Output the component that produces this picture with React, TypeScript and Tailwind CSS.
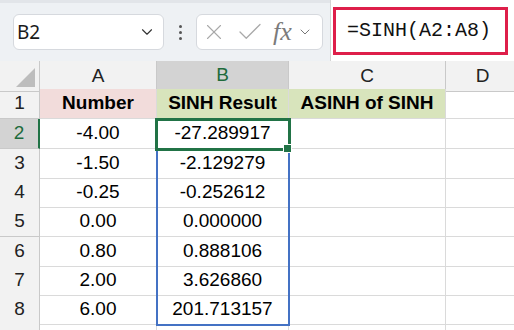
import { ChevronDown, X, Check } from 'lucide-react'

const rows = [
  { n: 2, a: '-4.00', b: '-27.289917', h: 'h-[30px]' },
  { n: 3, a: '-1.50', b: '-2.129279', h: 'h-[29px]' },
  { n: 4, a: '-0.25', b: '-0.252612', h: 'h-[29px]' },
  { n: 5, a: '0.00', b: '0.000000', h: 'h-[30px]' },
  { n: 6, a: '0.80', b: '0.888106', h: 'h-[29px]' },
  { n: 7, a: '2.00', b: '3.626860', h: 'h-[29px]' },
  { n: 8, a: '6.00', b: '201.713157', h: 'h-[29px]' },
]

const cols = 'grid grid-cols-[40px_117px_132px_157px_74px]'
const cell = 'flex items-center justify-center border-r border-b border-[#dadada]'
const rowHead = 'flex items-center justify-center border-r border-b border-[#c9c9c9] bg-[#f2f2f2] text-[#222]'

function Toolbar() {
  return (
    <div className="flex h-[61px]">
      <div className="flex items-center w-[330px] bg-[#eef1f4] border-t-[3px] border-[#e2e5e9] font-['Noto_Sans',sans-serif]">
        <div className="ml-[13px] w-[151px] h-[36px] flex items-center justify-between bg-white border border-[#d6d9de] rounded-[6px] pl-[3px] pr-[7px]">
          <span className="text-[19px] text-[#1a1a1a] leading-none">B2</span>
          <ChevronDown size={18} strokeWidth={1.5} className="text-[#333]" />
        </div>
        <div className="w-[32px] flex flex-col items-center gap-[3px]">
          <span className="w-[3px] h-[3px] rounded-full bg-[#555]" />
          <span className="w-[3px] h-[3px] rounded-full bg-[#555]" />
          <span className="w-[3px] h-[3px] rounded-full bg-[#555]" />
        </div>
        <div className="w-[127px] h-[36px] flex items-center bg-white border border-[#d6d9de] rounded-[6px] pl-[4px]">
          <X size={26} strokeWidth={1} className="text-[#a9a9a9]" />
          <Check size={30} strokeWidth={1} className="text-[#a9a9a9] ml-[8px]" />
          <span className="ml-[8px] font-['Liberation_Serif',serif] italic text-[26px] text-[#7b7b7b] leading-none">fx</span>
          <ChevronDown size={16} strokeWidth={1.5} className="text-[#777] ml-[5px]" />
        </div>
      </div>
      <div className="flex-1 flex items-center bg-white border-l border-[#d4d4d4] pl-[2px]">
        <div className="w-[175px] h-[48px] border-[3px] border-[#de1f4a] flex items-center pl-[11px]">
          <span className="font-['Liberation_Mono',monospace] text-[20px] text-[#111] leading-none">=SINH(A2:A8)</span>
        </div>
      </div>
    </div>
  )
}

function Sheet() {
  return (
    <div className="relative text-[19px] text-black">
      <div className={`${cols} h-[28px] text-[#222]`}>
        <div className="relative border-r border-b border-[#c9c9c9] bg-[#f2f2f2]">
          <svg className="absolute right-[4px] bottom-[4px]" width="19" height="19" viewBox="0 0 19 19">
            <path d="M19 0 L19 19 L0 19 Z" fill="#bdbdbd" />
          </svg>
        </div>
        <div className="flex items-center justify-center border-r border-b border-[#c9c9c9] bg-[#f2f2f2]">A</div>
        <div className="flex items-center justify-center border-r border-[#c9c9c9] border-b-2 border-b-[#217346] bg-[#d3d3d3] text-[#1e6b3c]">B</div>
        <div className="flex items-center justify-center border-r border-b border-[#c9c9c9] bg-[#f2f2f2]">C</div>
        <div className="flex items-center justify-center border-r border-b border-[#c9c9c9] bg-[#f2f2f2]">D</div>
      </div>
      <div className={`${cols} h-[30px] font-bold`}>
        <div className={`${rowHead} font-normal`}>1</div>
        <div className={`${cell} bg-[#f2dcdb]`}>Number</div>
        <div className={`${cell} bg-[#d8e4bc]`}>SINH Result</div>
        <div className={`${cell} bg-[#d8e4bc]`}>ASINH of SINH</div>
        <div className={cell} />
      </div>
      {rows.map(r => (
        <div key={r.n} className={`${cols} ${r.h}`}>
          {r.n === 2 ? (
            <div className="flex items-center justify-center border-b border-[#c9c9c9] border-r-2 border-r-[#217346] bg-[#d3d3d3] text-[#1e6b3c]">2</div>
          ) : (
            <div className={rowHead}>{r.n}</div>
          )}
          <div className={cell}>{r.a}</div>
          <div className={cell}>{r.b}</div>
          <div className={cell} />
          <div className={cell} />
        </div>
      ))}
      <div className={`${cols} h-[29px]`}>
        <div className={rowHead} />
        <div className={cell} />
        <div className={cell} />
        <div className={cell} />
        <div className={cell} />
      </div>

      <div className="absolute left-[156px] top-[58px] w-[134px] h-[207px] border-2 border-[#4472c4] pointer-events-none" />
      <div className="absolute left-[155px] top-[57px] w-[136px] h-[33px] border-[3px] border-[#217346] pointer-events-none" />
      <div className="absolute left-[283px] top-[83px] w-[9px] h-[9px] bg-[#217346] border border-white" />
    </div>
  )
}

export default function App() {
  return (
    <div className="w-[514px] h-[330px] overflow-hidden bg-white font-['Liberation_Sans',Arial,sans-serif]">
      <Toolbar />
      <Sheet />
    </div>
  )
}
